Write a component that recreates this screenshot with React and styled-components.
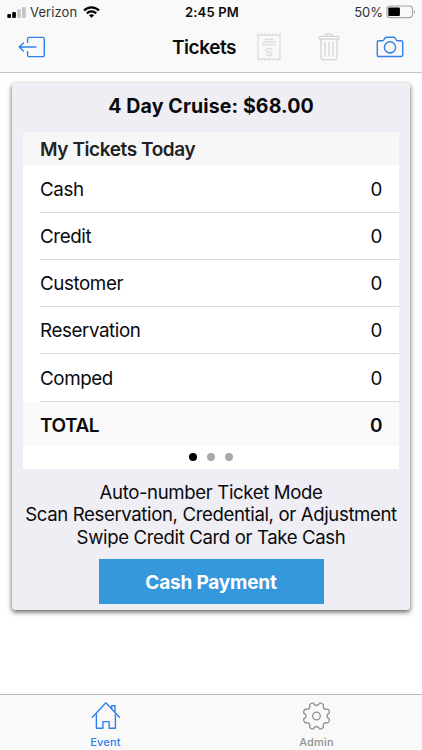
import React, { useState } from 'react'
import styled, { createGlobalStyle } from 'styled-components'

const blue = '#2f80ed';
const cardBg = '#efeef5';
const barBg = '#f9f9f9';
const grey = '#929292';

const GlobalStyle = createGlobalStyle`
    * {
        box-sizing: border-box;
    }

    body {
        margin: 0;
        background: #fff;
        color: #0b0b0c;
        font-family: Inter, "Liberation Sans", sans-serif;
    }

    p, h1, h2 {
        margin: 0;
    }

    svg {
        display: block;
    }
`;

function SignalIcon() {
    return (
        <svg width="20" height="14" viewBox="0 0 20 14">
            <rect x="0.3" y="9" width="3.7" height="4" rx="1" fill="#000" />
            <rect x="5.2" y="7" width="3.7" height="6" rx="1" fill="#000" />
            <rect x="10.2" y="4.2" width="3.7" height="8.8" rx="1" fill="#c4c4c4" />
            <rect x="15" y="2" width="3.7" height="11" rx="1" fill="#c4c4c4" />
        </svg>
    );
}

function WifiIcon() {
    return (
        <svg width="17" height="12" viewBox="0 0 17 12" fill="none" stroke="#000" strokeWidth="2.2">
            <path d="M1 4.6 C5.2 0.3 11.8 0.3 16 4.6" />
            <path d="M3.8 7.4 C6.5 4.7 10.5 4.7 13.2 7.4" />
            <path d="M8.5 11.8 L5.9 9.2 C7.4 7.9 9.6 7.9 11.1 9.2 Z" fill="#000" stroke="none" />
        </svg>
    );
}

function BatteryIcon() {
    return (
        <svg width="31" height="14" viewBox="0 0 31 14">
            <rect x="0.9" y="1" width="25.6" height="11.6" rx="3" fill="none" stroke="#a4a4a4" strokeWidth="1.1" />
            <rect x="2.3" y="2.5" width="11.6" height="8.6" rx="1" fill="#000" />
            <path d="M28 4.9 C29.5 5.3 29.5 8.3 28 8.7 Z" fill="#a4a4a4" />
        </svg>
    );
}

function ExitIcon() {
    return (
        <svg width="28" height="22" viewBox="0 0 28 22" fill="none" stroke={blue} strokeWidth="1.4" strokeLinecap="round" strokeLinejoin="round">
            <path d="M9.6 6.4 V2.8 Q9.6 1.4 11 1.4 H24.9 Q26.3 1.4 26.3 2.8 V19.2 Q26.3 20.6 24.9 20.6 H11 Q9.6 20.6 9.6 19.2 V15.6" />
            <path d="M18 11 H1.2 M5.4 6.9 L1.2 11 L5.4 15.1" />
        </svg>
    );
}

function ReceiptIcon() {
    return (
        <svg width="24" height="28" viewBox="0 0 24 28" fill="none" stroke="#dbdbdb" strokeWidth="1.3" strokeLinejoin="round">
            <path d="M1 0.9 Q2.7 3.6 4.4 1 Q6.3 3.6 8.2 1 Q10.1 3.6 12 1 Q13.9 3.6 15.8 1 Q17.7 3.6 19.6 1 Q21.3 3.6 23 0.9 V27.1 Q21.3 24.4 19.6 27 Q17.7 24.4 15.8 27 Q13.9 24.4 12 27 Q10.1 24.4 8.2 27 Q6.3 24.4 4.4 27 Q2.7 24.4 1 27.1 Z" />
            <path d="M7.8 6.5 H16.2 M5 9.2 H19.2 M5 11.8 H19.2" />
            <path d="M15 16.8 Q14.3 15.7 12 15.7 Q9 15.7 9 17.4 Q9 18.8 12 19 Q15 19.2 15 20.8 Q15 22.4 12 22.4 Q9.5 22.4 8.9 21.1 M12 14.2 V15.7 M12 22.4 V23.9" />
        </svg>
    );
}

function TrashIcon() {
    return (
        <svg width="22" height="28" viewBox="0 0 22 28" fill="none" stroke="#d4d4d4" strokeWidth="1.3" strokeLinejoin="round">
            <rect x="1.3" y="3.3" width="19.4" height="2.8" rx="0.8" />
            <path d="M7.5 3.3 Q7.7 0.8 8.8 0.8 H13.2 Q14.3 0.8 14.5 3.3" />
            <path d="M2.8 6.1 L3.2 25 Q3.3 26.7 4.8 26.7 H17.2 Q18.7 26.7 18.8 25 L19.2 6.1" />
            <path d="M7 9.5 V23.2 M11 9.5 V23.2 M15 9.5 V23.2" strokeLinecap="round" />
        </svg>
    );
}

function CameraIcon() {
    return (
        <svg width="28" height="22" viewBox="0 0 28 22" fill="none" stroke={blue} strokeWidth="1.4" strokeLinejoin="round">
            <path d="M2.7 4.8 H6.2 Q7.3 4.8 7.8 3.7 Q8.8 1.3 10.6 1.3 H17.4 Q19.2 1.3 20.2 3.7 Q20.7 4.8 21.8 4.8 H25.3 Q26.7 4.8 26.7 6.2 V19.1 Q26.7 20.5 25.3 20.5 H2.7 Q1.3 20.5 1.3 19.1 V6.2 Q1.3 4.8 2.7 4.8 Z" />
            <circle cx="14" cy="11.4" r="5.6" />
        </svg>
    );
}

function HomeIcon() {
    return (
        <svg width="30" height="29" viewBox="0 0 30 29" fill="none" stroke={blue} strokeWidth="1.4" strokeLinecap="round" strokeLinejoin="round">
            <path d="M1.4 16.2 L14.9 1.8 L28.4 16.2" />
            <path d="M20.6 7.4 V4.7 H24 V11" />
            <path d="M5.4 13.6 V27.2 H11.9 V20.6 H18.1 V27.2 H24.4 V13.6" />
        </svg>
    );
}

// eight teeth, with the gaps facing straight up, down, left and right
const gearPoint = (r, deg) => {
    const a = (deg * Math.PI) / 180;
    return `${(14.5 + r * Math.cos(a)).toFixed(2)} ${(15 + r * Math.sin(a)).toFixed(2)}`;
};

const gearPath = Array.from({ length: 8 }, (_, i) => {
    const c = i * 45 + 22.5;
    return `${i ? 'L' : 'M'}${gearPoint(13.3, c - 9)} Q${gearPoint(14.3, c)} ${gearPoint(13.3, c + 9)} L${gearPoint(11.7, c + 12)} Q${gearPoint(9.4, c + 22.5)} ${gearPoint(11.7, c + 33)}`;
}).join(' ') + ' Z';

function GearIcon() {
    return (
        <svg width="30" height="30" viewBox="0 0 30 30" fill="none" stroke={grey} strokeWidth="1.3" strokeLinejoin="round">
            <path d={gearPath} />
            <circle cx="14.5" cy="15" r="3.8" />
        </svg>
    );
}

function App() {

    const [tickets] = useState([
        { name: 'Cash', count: 0 },
        { name: 'Credit', count: 0 },
        { name: 'Customer', count: 0 },
        { name: 'Reservation', count: 0 },
        { name: 'Comped', count: 0 },
    ])
    const [page, setPage] = useState(0)
    const total = tickets.reduce((sum, ticket) => sum + ticket.count, 0);

    return (
        <Screen>
            <GlobalStyle />
            <Header>
                <StatusBar>
                    <Carrier>
                        <SignalIcon />
                        <p>Verizon</p>
                        <WifiIcon />
                    </Carrier>
                    <Time>2:45 PM</Time>
                    <Battery>
                        <p>50%</p>
                        <BatteryIcon />
                    </Battery>
                </StatusBar>
                <NavBar>
                    <NavButton aria-label="Exit"><ExitIcon /></NavButton>
                    <NavTitle>Tickets</NavTitle>
                    <NavActions>
                        <NavButton aria-label="Receipt" disabled><ReceiptIcon /></NavButton>
                        <NavButton aria-label="Delete" disabled><TrashIcon /></NavButton>
                        <NavButton aria-label="Camera"><CameraIcon /></NavButton>
                    </NavActions>
                </NavBar>
            </Header>
            <Content>
                <Card>
                    <CardTitle>4 Day Cruise: $68.00</CardTitle>
                    <Table>
                        <TableTitle>My Tickets Today</TableTitle>
                        {tickets.map(ticket => (
                            <Row key={ticket.name}>
                                <span>{ticket.name}</span>
                                <span>{ticket.count}</span>
                            </Row>
                        ))}
                        <TotalRow>
                            <span>TOTAL</span>
                            <span>{total}</span>
                        </TotalRow>
                        <Dots>
                            {[0, 1, 2].map(i => (<Dot key={i} $active={i === page} onClick={() => setPage(i)} />))}
                        </Dots>
                    </Table>
                    <Hints>
                        <Hint>Auto-number Ticket Mode</Hint>
                        <Hint>Scan Reservation, Credential, or Adjustment</Hint>
                        <Hint>Swipe Credit Card or Take Cash</Hint>
                    </Hints>
                    <PaymentButton>Cash Payment</PaymentButton>
                </Card>
            </Content>
            <TabBar>
                <Tab $active><HomeIcon /><p>Event</p></Tab>
                <Tab><GearIcon /><p>Admin</p></Tab>
            </TabBar>
        </Screen>
    );
}

const Screen = styled.div`
    display: flex;
    flex-direction: column;
    height: 750px;
    overflow: hidden;
`;

const Header = styled.header`
    height: 73px;
    background: ${barBg};
    border-bottom: 1px solid #c3c3c5;
`;

const StatusBar = styled.div`
    display: grid;
    grid-template-columns: 1fr auto 1fr;
    align-items: center;
    height: 23px;
    padding: 1px 5px 0 7px;
    font-size: 13px;
    line-height: 22px;
`;

const Carrier = styled.div`
    display: flex;
    align-items: center;

    > p {
        margin: 0 6px 0 3px;
        color: #333;
        letter-spacing: 0.1px;
    }
`;

const Time = styled.p`
    font-weight: 600;
    letter-spacing: 0.2px;
`;

const Battery = styled.div`
    display: flex;
    align-items: center;
    justify-content: flex-end;

    > p {
        margin-right: 3px;
        color: #333;
    }
`;

const NavBar = styled.nav`
    display: flex;
    align-items: center;
    height: 48px;
    padding: 0 18px;
`;

const NavButton = styled.button`
    display: flex;
    padding: 0;
    border: none;
    background: transparent;
`;

const NavTitle = styled.h1`
    width: 65px;
    margin-left: 126px;
    padding-top: 1px;
    font-size: 19px;
    font-weight: 600;
    letter-spacing: -0.45px;
`;

const NavActions = styled.div`
    display: flex;
    flex: 1;
    align-items: center;
    justify-content: space-between;
    margin-left: 20px;
`;

const Content = styled.main`
    flex: 1;
    padding: 10px 12px 0;
`;

const Card = styled.section`
    display: flex;
    flex-direction: column;
    align-items: center;
    height: 527px;
    padding: 0 11px;
    border-radius: 3px;
    background: ${cardBg};
    box-shadow: 0 2px 5px rgba(0, 0, 0, 0.65);
`;

const CardTitle = styled.h2`
    height: 49px;
    font-size: 19.6px;
    font-weight: 700;
    letter-spacing: 0.1px;
    line-height: 46px;
`;

const Table = styled.div`
    width: 100%;
    height: 337px;
    background: #fff;
`;

const TableTitle = styled.h2`
    height: 33px;
    margin-bottom: 0.6px;
    padding-left: 17px;
    background: #f7f7f7;
    color: #222;
    font-size: 19px;
    font-weight: 600;
    letter-spacing: -0.42px;
    line-height: 35px;
`;

const Row = styled.div`
    display: flex;
    align-items: center;
    justify-content: space-between;
    height: 47.2px;
    margin-left: 17px;
    padding: 1.4px 17px 0 0;
    border-bottom: 1px solid #dcdcde;
    font-size: 18.8px;
    letter-spacing: -0.42px;
`;

const TotalRow = styled.div`
    display: flex;
    align-items: center;
    justify-content: space-between;
    height: 44.4px;
    padding: 3px 17px 0;
    background: #fafafa;
    font-size: 19px;
    font-weight: 600;
    letter-spacing: -0.45px;
`;

const Dots = styled.div`
    display: flex;
    align-items: center;
    justify-content: center;
    gap: 10px;
    height: 23px;
`;

const Dot = styled.span`
    width: 8px;
    height: 8px;
    border-radius: 50%;
    background: ${({ $active }) => ($active ? '#000' : '#a9a9a9')};
`;

const Hints = styled.div`
    margin-top: 12px;
    text-align: center;
`;

const Hint = styled.p`
    font-size: 18.6px;
    letter-spacing: -0.37px;
    line-height: 22.4px;
    white-space: nowrap;
`;

const PaymentButton = styled.button`
    width: 225px;
    height: 45px;
    margin-top: 11px;
    padding: 1px 0 0;
    border: none;
    background: #3598db;
    color: #fff;
    font-family: inherit;
    font-size: 19px;
    font-weight: 700;
    letter-spacing: -0.2px;
`;

const TabBar = styled.footer`
    display: flex;
    height: 56px;
    border-top: 1px solid #b9b9bb;
    background: ${barBg};
`;

const Tab = styled.div`
    display: flex;
    flex: 1;
    flex-direction: column;
    align-items: center;
    justify-content: space-between;
    padding: 6px 0 1px;
    color: ${({ $active }) => ($active ? blue : grey)};
    font-size: 11px;
    font-weight: 500;
    letter-spacing: 0.2px;
    line-height: 14px;
`;

export default App;
